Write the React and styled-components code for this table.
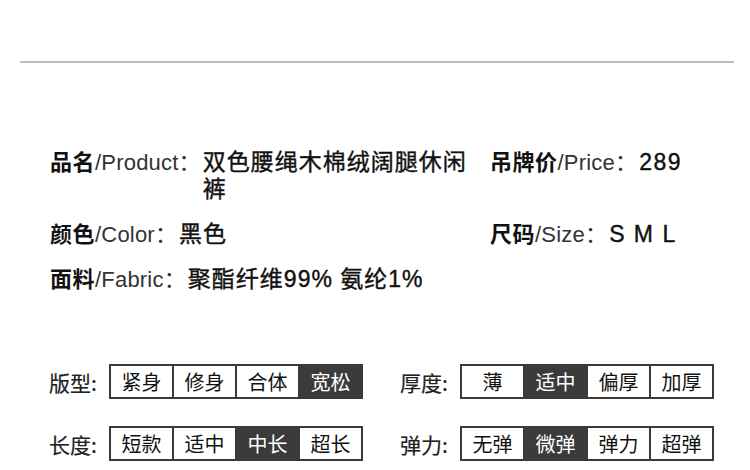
import styled, { createGlobalStyle } from "styled-components";

const GlobalStyle = createGlobalStyle`
  body {
    margin: 0;
    background: #fff;
    font-family: "Liberation Sans", "Noto Sans CJK SC", sans-serif;
    color: #111;
  }
`;

const Page = styled.div`
  width: 750px;
  height: 470px;
  overflow: hidden;
  padding-top: 61px;
  box-sizing: border-box;
`;

const Divider = styled.div`
  height: 2px;
  margin: 0 16px 0 20px;
  background: #bdbdbd;
`;

const InfoGrid = styled.div`
  display: grid;
  grid-template-columns: 420px 1fr;
  column-gap: 20px;
  row-gap: 18px;
  padding-left: 50px;
  margin-top: 86px;
`;

const InfoRow = styled.div`
  display: flex;
  align-items: flex-start;
  line-height: 27px;
`;

const Label = styled.span`
  flex: none;
  font-size: 22px;
  font-weight: 700;
  letter-spacing: 0.5px;
  color: #111;
`;

const EnLabel = styled.span`
  font-size: 22px;
  font-weight: 400;
  letter-spacing: 0.2px;
  color: #333;
`;

const Value = styled.span`
  flex: 1;
  margin-left: 2px;
  font-size: 23px;
  letter-spacing: ${(p) => p.$spacing || "1px"};
  color: #111;
  -webkit-text-stroke: 0.4px #111;
`;

const SpecGrid = styled.div`
  display: grid;
  grid-template-columns: 351px 351px;
  row-gap: 27px;
  padding-left: 49px;
  margin-top: 71px;
`;

const SpecRow = styled.div`
  display: flex;
  align-items: center;
`;

const SpecLabel = styled.span`
  width: 60px;
  flex: none;
  font-family: "Noto Sans CJK SC", sans-serif;
  font-size: 21px;
  color: #222;
  -webkit-text-stroke: 0.2px #222;
`;

const Options = styled.div`
  display: flex;
  border: 2px solid #3a3a3a;
`;

const Option = styled.div`
  width: 61px;
  height: 31px;
  display: flex;
  align-items: center;
  justify-content: center;
  font-family: "Noto Sans CJK SC", sans-serif;
  font-size: 20px;
  background: ${(p) => (p.$active ? "#3b3b3b" : "#fff")};
  color: ${(p) => (p.$active ? "#fff" : "#111")};
  & + & {
    border-left: 2px solid #3a3a3a;
  }
`;

const info = [
  { zh: "品名", en: "/Product：", value: "双色腰绳木棉绒阔腿休闲裤" },
  { zh: "吊牌价", en: "/Price：", value: "289", spacing: "1.5px" },
  { zh: "颜色", en: "/Color：", value: "黑色" },
  { zh: "尺码", en: "/Size：", value: "S M L", spacing: "1.5px" },
  { zh: "面料", en: "/Fabric：", value: "聚酯纤维99% 氨纶1%" },
];

const specs = [
  { label: "版型:", options: ["紧身", "修身", "合体", "宽松"], active: 3 },
  { label: "厚度:", options: ["薄", "适中", "偏厚", "加厚"], active: 1 },
  { label: "长度:", options: ["短款", "适中", "中长", "超长"], active: 2 },
  { label: "弹力:", options: ["无弹", "微弹", "弹力", "超弹"], active: 1 },
];

function App() {
  return (
    <>
      <GlobalStyle />
      <Page>
        <Divider />
        <InfoGrid>
          {info.map((row) => (
            <InfoRow key={row.zh}>
              <Label>
                {row.zh}
                <EnLabel>{row.en}</EnLabel>
              </Label>
              <Value $spacing={row.spacing}>{row.value}</Value>
            </InfoRow>
          ))}
        </InfoGrid>
        <SpecGrid>
          {specs.map((spec) => (
            <SpecRow key={spec.label}>
              <SpecLabel>{spec.label}</SpecLabel>
              <Options>
                {spec.options.map((opt, i) => (
                  <Option key={opt} $active={i === spec.active}>
                    {opt}
                  </Option>
                ))}
              </Options>
            </SpecRow>
          ))}
        </SpecGrid>
      </Page>
    </>
  );
}

export default App;
